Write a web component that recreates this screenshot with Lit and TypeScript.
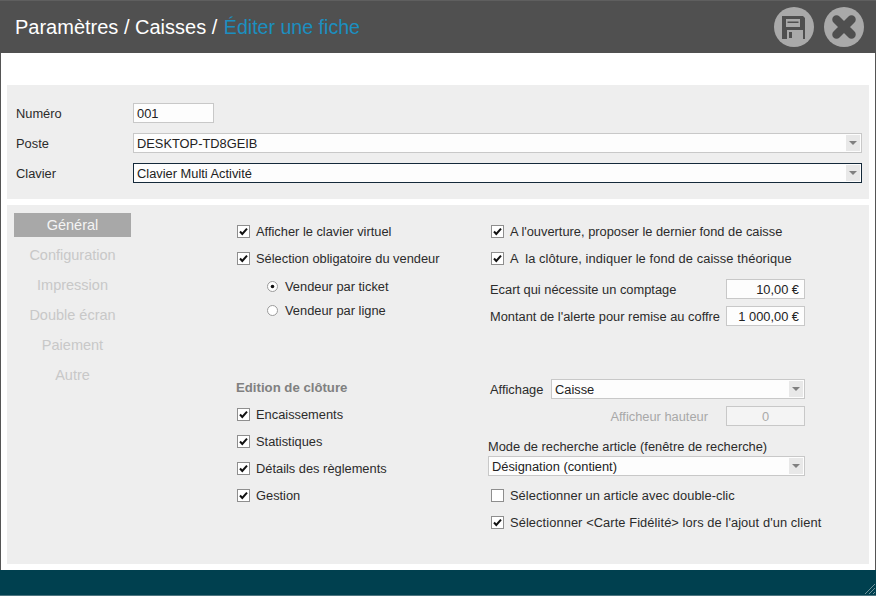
import { LitElement, html, css, svg } from "lit";
import { customElement } from "lit/decorators.js";

const NAV = ["Général", "Configuration", "Impression", "Double écran", "Paiement", "Autre"];

@customElement("app-root")
export class AppRoot extends LitElement {
  static styles = css`
    :host { display: flex; flex-direction: column; width: 876px; height: 596px; overflow: hidden;
      font-family: "Liberation Sans", Arial, sans-serif; font-size: 12.85px; color: #2b2b2b; background: #fff; box-sizing: border-box; }
    * { box-sizing: border-box; }
    .header { height: 53px; flex: none; background: #505050; border-top: 1px solid #5f5f5f; display: flex; align-items: center; padding: 0 12px 0 15px; }
    .crumbs { font-size: 20px; color: #fff; flex: 1; white-space: pre; padding-top: 1px; }
    .crumbs span { color: #1b8fc0; font-size: 19.6px; margin-left: 1px; }
    .round { width: 40px; height: 40px; display: block; }
    .actions { display: flex; gap: 10px; }
    .main { flex: 1; display: flex; flex-direction: column; gap: 6px; padding: 32px 6px 6px 6px; border-left: 1px solid #555; border-right: 1px solid #555; }
    .panel { background: #eeeeee; }
    .top { height: 114px; padding: 18px 7px 0 9px; display: flex; flex-direction: column; gap: 10px; }
    .top-row { display: flex; align-items: center; height: 20px; }
    .top-row label { width: 117px; flex: none; }
    .field { height: 20px; background: #fdfdfd; border: 1px solid #c8c8c8; display: flex; align-items: center; padding: 0 3px; color: #222; white-space: nowrap; }
    .num { width: 81px; }
    .select { position: relative; flex: 1; padding-left: 3px; }
    .select.focus { border-color: #14293a; }
    .select::after { content: ""; position: absolute; right: 1px; top: 1px; bottom: 1px; width: 14px; background: #e8e8e8; }
    .select::before { content: ""; position: absolute; z-index: 1; right: 4px; top: 7px; border-left: 4px solid transparent; border-right: 4px solid transparent; border-top: 4px solid #808080; }
    .bottom { flex: 1; display: flex; padding-left: 7px; }
    .nav { width: 117px; flex: none; padding-top: 8px; display: flex; flex-direction: column; gap: 6px; }
    .nav div { height: 24px; display: flex; align-items: center; justify-content: center; font-size: 14.5px; color: #c8c8c8; }
    .nav .on { background: #a8a8a8; color: #f4f4f4; }
    .col-l { width: 251px; margin-left: 106px; flex: none; padding-top: 13px; }
    .col-r { width: 317px; flex: none; padding-top: 13px; }
    .check { height: 27px; display: flex; align-items: center; gap: 6px; white-space: pre; }
    .col-r .check { padding-left: 3px; }
    .wide { letter-spacing: 0.05px; }
    .slight { letter-spacing: 0.09px; }
    .box { width: 13px; height: 13px; border: 1px solid #8e8e8e; background: #fff; flex: none; display: block; }
    .radios { margin-top: 2px; padding-left: 30px; }
    .radio { height: 24px; display: flex; align-items: center; gap: 7px; }
    .dot { width: 11px; height: 11px; flex: none; display: block; }
    .title { margin-top: 55px; margin-bottom: 3px; margin-left: -1px; height: 21px; display: flex; align-items: center; font-weight: bold; font-size: 13.2px; color: #808080; }
    .line { height: 20px; display: flex; align-items: center; justify-content: space-between; margin-top: 7px; padding-left: 2px; white-space: nowrap; }
    .line.gapped { margin-top: 53px; }
    .amount { width: 79px; justify-content: flex-end; padding-right: 5px; }
    .aff { width: 61px; flex: none; }
    .end { justify-content: flex-end; gap: 18px; }
    .disabled { color: #a8a8a8; }
    .amount.off { background: #f4f4f4; color: #aaa; justify-content: center; padding: 0; }
    .mode-label { margin-top: 13px; height: 14px; display: flex; align-items: center; white-space: nowrap; }
    .mode { margin-top: 3px; display: flex; }
    .checks { margin-top: 6px; }
    .footer { height: 26px; flex: none; background: #00404f; border-bottom: 1px solid #4d7580; display: flex; justify-content: flex-end; align-items: flex-end; }
    .grip { width: 14px; height: 14px; display: block; }
  `;

  private box(checked: boolean) {
    return html`<svg class="box" viewBox="0 0 11 11">${checked ? svg`<path d="M2 5.5 L4.3 8 L9 2.6" fill="none" stroke="#111" stroke-width="2"/>` : ""}</svg>`;
  }
  private check(text: string, checked = true, cls = "") {
    return html`<div class="check">${this.box(checked)}<span class=${cls}>${text}</span></div>`;
  }
  private radio(text: string, on: boolean) {
    return html`<div class="radio"><svg class="dot" viewBox="0 0 11 11"><circle cx="5.5" cy="5.5" r="5" fill="#fff" stroke="#9a9a9a"/>${on ? svg`<circle cx="5.5" cy="5.5" r="1.8" fill="#111"/>` : ""}</svg><span>${text}</span></div>`;
  }

  render() {
    return html`
      <div class="header">
        <div class="crumbs">Paramètres / Caisses / <span>Éditer une fiche</span></div>
        <div class="actions">
          <svg class="round" viewBox="0 0 40 40"><circle cx="20" cy="20" r="20" fill="#a9a9a9"/>
            <path fill="#4f4f4f" d="M8 9h21l2 2v21H8z"/>
            <rect x="12" y="12" width="14" height="8" fill="#a9a9a9"/>
            <rect x="13.5" y="14.5" width="11" height="1.5" fill="#4f4f4f"/>
            <rect x="13" y="23" width="16" height="9" fill="#a9a9a9"/>
            <rect x="15" y="25" width="3" height="6" fill="#4f4f4f"/></svg>
          <svg class="round" viewBox="0 0 40 40"><circle cx="20" cy="20" r="20" fill="#a9a9a9"/>
            <path d="M12.5 12.5 L27.5 27.5 M27.5 12.5 L12.5 27.5" stroke="#4f4f4f" stroke-width="8.5" stroke-linecap="round"/></svg>
        </div>
      </div>
      <div class="main">
        <div class="panel top">
          <div class="top-row"><label>Numéro</label><div class="field num">001</div></div>
          <div class="top-row"><label>Poste</label><div class="field select">DESKTOP-TD8GEIB</div></div>
          <div class="top-row"><label>Clavier</label><div class="field select focus">Clavier Multi Activité</div></div>
        </div>
        <div class="panel bottom">
          <div class="nav">${NAV.map((n, i) => html`<div class=${i === 0 ? "on" : ""}>${n}</div>`)}</div>
          <div class="col-l">
            ${this.check("Afficher le clavier virtuel")}
            ${this.check("Sélection obligatoire du vendeur")}
            <div class="radios">
              ${this.radio("Vendeur par ticket", true)}
              ${this.radio("Vendeur par ligne", false)}
            </div>
            <div class="title">Edition de clôture</div>
            ${this.check("Encaissements")}
            ${this.check("Statistiques")}
            ${this.check("Détails des règlements")}
            ${this.check("Gestion")}
          </div>
          <div class="col-r">
            ${this.check("A l'ouverture, proposer le dernier fond de caisse")}
            ${this.check("A  la clôture, indiquer le fond de caisse théorique", true, "slight")}
            <div class="line"><span>Ecart qui nécessite un comptage</span><div class="field amount">10,00 €</div></div>
            <div class="line"><span>Montant de l'alerte pour remise au coffre</span><div class="field amount">1 000,00 €</div></div>
            <div class="line gapped"><span class="aff">Affichage</span><div class="field select">Caisse</div></div>
            <div class="line end"><span class="disabled">Afficheur hauteur</span><div class="field amount off">0</div></div>
            <div class="mode-label">Mode de recherche article (fenêtre de recherche)</div>
            <div class="mode"><div class="field select">Désignation (contient)</div></div>
            <div class="checks">
              ${this.check("Sélectionner un article avec double-clic", false, "wide")}
              ${this.check("Sélectionner <Carte Fidélité> lors de l'ajout d'un client", true, "slight")}
            </div>
          </div>
        </div>
      </div>
      <div class="footer">
        <svg class="grip" viewBox="0 0 14 14"><path d="M13 3 L3 13 M13 7 L7 13 M13 11 L11 13" stroke="#6f929a" stroke-width="1" fill="none"/></svg>
      </div>
    `;
  }
}
